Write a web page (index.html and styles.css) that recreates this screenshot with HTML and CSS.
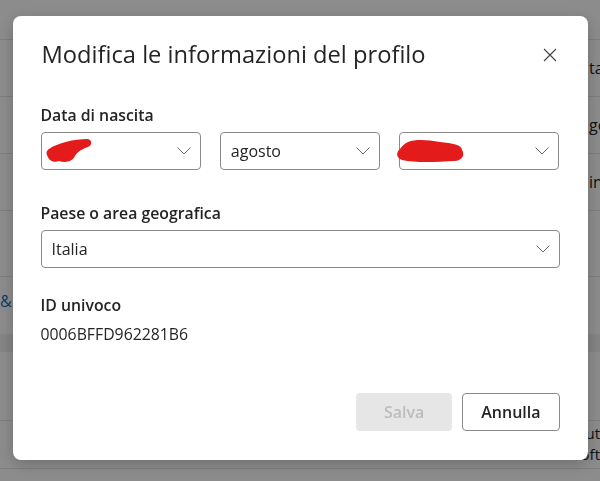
FILE: index.html
```html
<!DOCTYPE html>
<html lang="it">
<head>
    <meta charset="utf-8">
    <title>Profilo</title>
    <link rel="stylesheet" href="styles.css">
</head>
<body>
    <!-- account page behind the modal -->
    <div class="page">
        <div class="row row-top"></div>
        <div class="row"><span class="peek">ta</span></div>
        <div class="row"><span class="peek">ge</span></div>
        <div class="row"><span class="peek">in</span></div>
        <div class="row row-tall"></div>
        <div class="row row-link"><a href="#">&amp;</a></div>
        <div class="band"></div>
        <div class="row row-info"></div>
        <div class="row row-note">
            <p>Gestisci le informazioni di accesso e di logout<br>all'account Microsoft</p>
        </div>
    </div>

    <div class="overlay">
        <div class="dialog" role="dialog" aria-labelledby="dlgTitle">
            <div class="dialog-head">
                <h2 id="dlgTitle">Modifica le informazioni del profilo</h2>
                <button class="close" type="button" aria-label="Chiudi">
                    <svg width="14" height="14" viewBox="0 0 14 14">
                        <path d="M1 1L13 13M13 1L1 13" stroke="#424242" stroke-width="1.1" fill="none"/>
                    </svg>
                </button>
            </div>

            <div class="field">
                <label>Data di nascita</label>
                <div class="date-row">
                    <div class="select">
                        <svg class="redact" width="48" height="24" viewBox="0 0 48 24">
                            <path d="M4 10C12 4 30 0 42 0C47 0 48 6 43 8C37 10 32 13 30 17C27 23 20 24 14 22C10 24 4 22 3 18C1 15 1 12 4 10Z" fill="#e31b1b"/>
                        </svg>
                        <svg class="chev" width="14" height="8" viewBox="0 0 14 8">
                            <path d="M0.5 0.5L7 7L13.5 0.5" stroke="#6b6b6b" fill="none"/>
                        </svg>
                    </div>
                    <div class="select">
                        <span>agosto</span>
                        <svg class="chev" width="14" height="8" viewBox="0 0 14 8">
                            <path d="M0.5 0.5L7 7L13.5 0.5" stroke="#6b6b6b" fill="none"/>
                        </svg>
                    </div>
                    <div class="select">
                        <svg class="redact redact-year" width="70" height="24" viewBox="0 0 70 24">
                            <path d="M12 3C20 0 32 1 44 3C56 4 66 6 66 11C69 15 67 22 58 22C40 23 20 24 6 21C0 19 0 13 4 10C6 7 8 5 12 3Z" fill="#e31b1b"/>
                        </svg>
                        <svg class="chev" width="14" height="8" viewBox="0 0 14 8">
                            <path d="M0.5 0.5L7 7L13.5 0.5" stroke="#6b6b6b" fill="none"/>
                        </svg>
                    </div>
                </div>
            </div>

            <div class="field field-country">
                <label>Paese o area geografica</label>
                <div class="select">
                    <span>Italia</span>
                    <svg class="chev" width="14" height="8" viewBox="0 0 14 8">
                        <path d="M0.5 0.5L7 7L13.5 0.5" stroke="#6b6b6b" fill="none"/>
                    </svg>
                </div>
            </div>

            <div class="field field-id">
                <label>ID univoco</label>
                <div class="value">0006BFFD962281B6</div>
            </div>

            <div class="actions">
                <button class="btn btn-primary" type="button" disabled>Salva</button>
                <button class="btn" type="button">Annulla</button>
            </div>
        </div>
    </div>
</body>
</html>
```

FILE: styles.css
```css
body {
    margin: 0;
    font-family: "Open Sans", "Noto Sans", sans-serif;
    color: #242424;
    background: #fff;
    overflow: hidden;
}

/* page behind the modal */
.page {
    height: 481px;
    overflow: hidden;
    font-size: 15px;
}
.row {
    height: 57px;
    border-bottom: 1px solid #e6e6e6;
    display: flex;
    align-items: center;
    box-sizing: border-box;
}
.row-top {
    height: 40px;
}
.row-tall {
    height: 66px;
}
.row-link {
    height: 57px;
    border-bottom: none;
}
.row-link a {
    color: #0f6cbd;
    text-decoration: none;
    font-size: 16px;
    margin-top: -10px;
}
.band {
    height: 18px;
    background: #f0f0f0;
}
.row-info {
    height: 69px;
}
.row-note {
    height: 48px;
    align-items: flex-start;
}
.row-note p {
    margin: 2px 0 0 0;
    width: 604px;
    text-align: right;
    line-height: 21px;
    white-space: nowrap;
}
.peek {
    margin-left: 589px;
    font-size: 16px;
}

/* modal */
.overlay {
    position: fixed;
    inset: 0;
    background: rgba(0, 0, 0, 0.45);
    display: flex;
    justify-content: center;
    align-items: flex-start;
    padding-top: 16px;
}
.dialog {
    width: 575px;
    height: 444px;
    box-sizing: border-box;
    background: #fff;
    border-radius: 8px;
    padding: 22px 28px 29px;
    box-shadow: 0 4px 16px rgba(0, 0, 0, 0.22);
    display: flex;
    flex-direction: column;
}
.dialog-head {
    display: flex;
    align-items: center;
    justify-content: space-between;
    height: 32px;
}
.dialog-head h2 {
    margin: 0 0 0 1px;
    font-size: 23.7px;
    font-weight: 400;
    line-height: 32px;
}
.close {
    width: 20px;
    height: 20px;
    padding: 0;
    border: none;
    background: none;
    display: flex;
    align-items: center;
    justify-content: center;
    margin-top: 2px;
}

.field label {
    display: block;
    font-size: 15.8px;
    font-weight: 600;
    line-height: 22px;
    margin-bottom: 6px;
}
.field {
    margin-top: 34px;
}
.field-country {
    margin-top: 32px;
}
.field-id {
    margin-top: 26px;
}
.field-id label {
    margin-bottom: 7px;
}
.value {
    font-size: 15.8px;
    line-height: 22px;
}

.date-row {
    display: grid;
    grid-template-columns: repeat(3, 1fr);
    gap: 19px;
}
.select {
    height: 38px;
    box-sizing: border-box;
    border: 1px solid #8a8a8a;
    border-radius: 4px;
    padding: 0 9px 0 10px;
    display: flex;
    align-items: center;
    justify-content: space-between;
    font-size: 16px;
}
.redact {
    margin-left: -7px;
}
.redact-year {
    margin-left: -14px;
}

.actions {
    margin-top: auto;
    display: flex;
    justify-content: flex-end;
    gap: 10px;
}
.btn {
    font-family: inherit;
    font-size: 16px;
    font-weight: 600;
    height: 38px;
    min-width: 96px;
    padding: 0 18px;
    border: 1px solid #8a8a8a;
    border-radius: 4px;
    background: #fff;
    color: #242424;
}
.btn-primary {
    border-color: #e6e6e6;
    background: #e6e6e6;
    color: #bdbdbd;
}
```
